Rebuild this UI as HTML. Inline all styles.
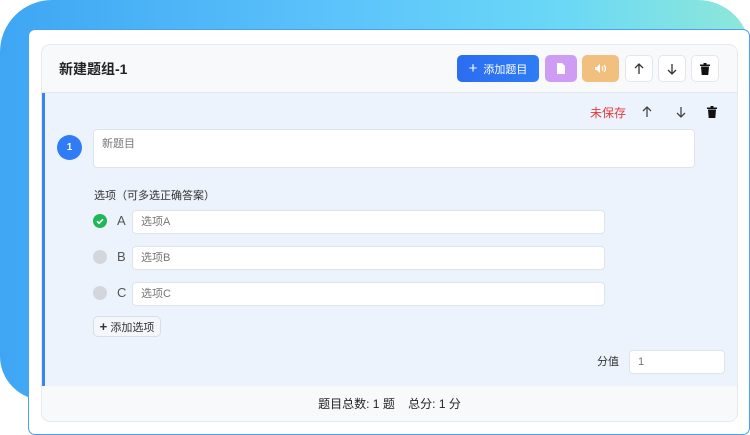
<!DOCTYPE html>
<html><head><meta charset="utf-8"><style>
*{box-sizing:border-box;margin:0;padding:0}
body{width:750px;height:435px;background:#fff;position:relative;overflow:hidden;font-family:"Liberation Sans","Noto Sans CJK SC",sans-serif;}
.bg{position:absolute;left:0;top:0;width:750px;height:400px;border-radius:52px 52px 0 44px;background:linear-gradient(90deg,#3ea6f3 0%,#5cc3fb 45%,#6ad8f6 75%,#8ee8d8 100%);}
.card{position:absolute;left:28px;top:29px;width:722px;height:406px;background:#fff;border:1.5px solid #4aa0ee;border-radius:7px;}
.panel{position:absolute;left:41px;top:44px;width:697px;height:378px;border:1px solid #e6e9ee;border-radius:9px;overflow:hidden;background:#f8f9fb;}
.hdr{position:absolute;left:0;top:0;width:100%;height:48px;border-bottom:1px solid #e4e7ec;}
.title{position:absolute;left:17px;top:14px;font-size:14px;font-weight:bold;color:#222;}
.btn{position:absolute;top:10px;height:27px;border-radius:5px;display:flex;align-items:center;justify-content:center;}
.q{position:absolute;left:0;top:48px;width:100%;height:293px;background:#edf3fc;border-left:3px solid #3b82f6;}
.ft{position:absolute;left:0;top:341px;width:100%;height:37px;text-align:center;font-size:12px;color:#222;line-height:37px;}
.inp{position:absolute;background:#fff;border:1px solid #dfe3ea;border-radius:4px;font-size:11px;color:#777;padding-left:8px;}
.abs{position:absolute}
</style></head><body>
<div class="bg"></div>
<div class="card"></div>
<div class="panel">
 <div class="hdr">
  <div class="title">新建题组-1</div>
  <div class="btn" style="left:415px;width:82px;background:linear-gradient(90deg,#2b6ef0,#2f7cf6);color:#fff;font-size:11px;"><span style="font-size:15px;margin-right:6px;line-height:1">+</span>添加题目</div>
  <div class="btn" style="left:503px;width:32px;background:#cf9cf3;"><svg width="10" height="11" viewBox="0 0 10 11"><path d="M1 0h5l3 3v8H1z" fill="#fff"/></svg></div>
  <div class="btn" style="left:540px;width:37px;background:#f1c07f;"><svg width="14" height="11" viewBox="0 0 14 11"><path d="M1 4h2l3-3v9L3 7H1z" fill="#fff"/><path d="M8 3.5q1.5 2 0 4M10 2q3 3.5 0 7" stroke="#fff" fill="none" stroke-width="1.2"/></svg></div>
  <div class="btn" style="left:583px;width:28px;background:#fff;border:1px solid #e3e6eb;"><svg width="10" height="12" viewBox="0 0 10 12"><path d="M5 11V1M1 5l4-4 4 4" stroke="#333" fill="none" stroke-width="1.3"/></svg></div>
  <div class="btn" style="left:616px;width:28px;background:#fff;border:1px solid #e3e6eb;"><svg width="10" height="12" viewBox="0 0 10 12"><path d="M5 1v10M1 7l4 4 4-4" stroke="#333" fill="none" stroke-width="1.3"/></svg></div>
  <div class="btn" style="left:649px;width:28px;background:#fff;border:1px solid #e3e6eb;"><svg width="10" height="12" viewBox="0 0 10 12"><path d="M0 1.5h10v1.5H0zM3.5 0h3v1.5h-3zM1 3.5h8l-.7 8.5H1.7z" fill="#111"/></svg></div>
 </div>
 <div class="q">
  <div class="abs" style="left:545px;top:11px;font-size:12px;color:#e5383b;">未保存</div>
  <svg class="abs" style="left:597px;top:13px" width="10" height="12" viewBox="0 0 10 12"><path d="M5 11V1M1 5l4-4 4 4" stroke="#444" fill="none" stroke-width="1.3"/></svg>
  <svg class="abs" style="left:631px;top:13px" width="10" height="12" viewBox="0 0 10 12"><path d="M5 1v10M1 7l4 4 4-4" stroke="#444" fill="none" stroke-width="1.3"/></svg>
  <svg class="abs" style="left:662px;top:13px" width="10" height="12" viewBox="0 0 10 12"><path d="M0 1.5h10v1.5H0zM3.5 0h3v1.5h-3zM1 3.5h8l-.7 8.5H1.7z" fill="#111"/></svg>
  <div class="abs" style="left:12px;top:42px;width:25px;height:25px;border-radius:50%;background:#2f7cf6;color:#fff;font-size:10px;font-weight:bold;text-align:center;line-height:25px;">1</div>
  <div class="inp" style="left:48px;top:36px;width:602px;height:39px;padding-top:5px;">新题目</div>
  <div class="abs" style="left:49px;top:94px;font-size:11px;color:#333;">选项（可多选正确答案）</div>
  <div class="abs" style="left:48px;top:121px;width:14px;height:14px;border-radius:50%;background:#1fb857;"><svg width="14" height="14" viewBox="0 0 14 14"><path d="M4 7.2l2 2 4-4" stroke="#fff" fill="none" stroke-width="1.6"/></svg></div>
  <div class="abs" style="left:72px;top:120px;font-size:13px;color:#555;">A</div>
  <div class="inp" style="left:87px;top:117px;width:473px;height:24px;line-height:22px;">选项A</div>
  <div class="abs" style="left:48px;top:157px;width:14px;height:14px;border-radius:50%;background:#d3d7dd;"></div>
  <div class="abs" style="left:72px;top:156px;font-size:13px;color:#555;">B</div>
  <div class="inp" style="left:87px;top:153px;width:473px;height:24px;line-height:22px;">选项B</div>
  <div class="abs" style="left:48px;top:193px;width:14px;height:14px;border-radius:50%;background:#d3d7dd;"></div>
  <div class="abs" style="left:72px;top:192px;font-size:13px;color:#555;">C</div>
  <div class="inp" style="left:87px;top:189px;width:473px;height:24px;line-height:22px;">选项C</div>
  <div class="abs" style="left:48px;top:223px;width:68px;height:21px;border:1px solid #d9dee6;border-radius:5px;background:#f3f6fa;font-size:11px;color:#333;line-height:19px;text-align:center;"><b style="font-size:13px">+</b> 添加选项</div>
  <div class="abs" style="left:552px;top:260px;font-size:11px;color:#333;">分值</div>
  <div class="inp" style="left:584px;top:257px;width:96px;height:24px;line-height:22px;">1</div>
 </div>
 <div class="ft">题目总数: 1 题 &nbsp;&nbsp; 总分: 1 分</div>
</div>
</body></html>
